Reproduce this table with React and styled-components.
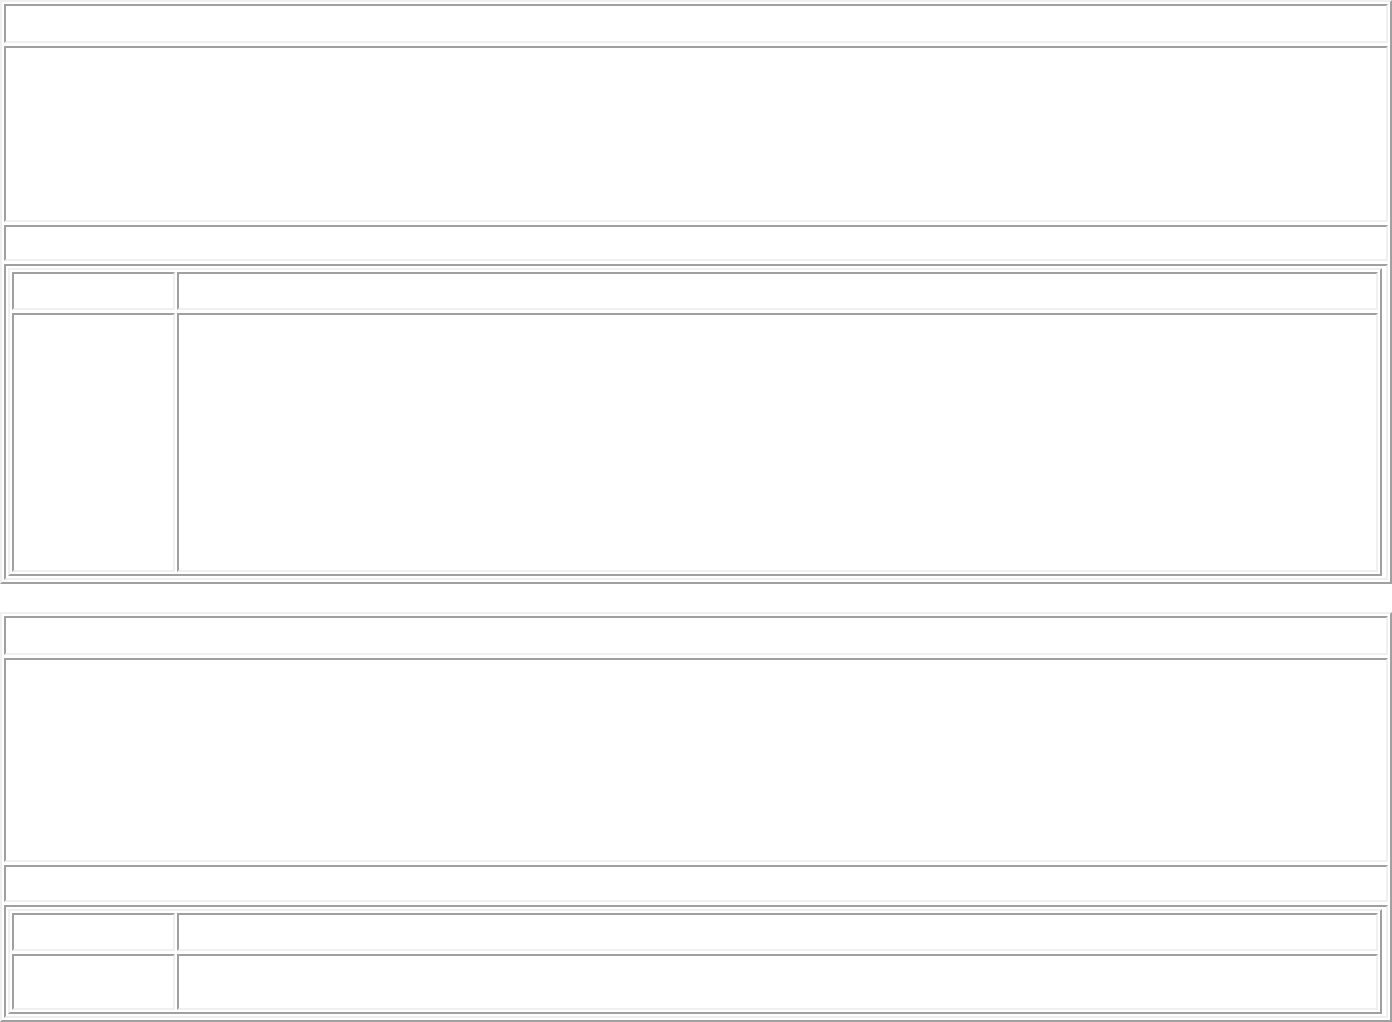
import React from "react";
import styled, { createGlobalStyle } from "styled-components";

const LIGHT = "#f0f0f0";
const DARK = "#a0a0a0";

const GlobalStyle = createGlobalStyle`
  html, body {
    margin: 0;
    padding: 0;
    background: #ffffff;
    font-family: "Liberation Serif", "Times New Roman", serif;
  }
`;

const Page = styled.div`
  display: flex;
  flex-direction: column;
  gap: 28px;
  width: 1392px;
`;

const OuterTable = styled.div`
  display: grid;
  grid-template-columns: 1fr;
  row-gap: 3px;
  padding: 2px;
  border: 2px solid;
  border-color: ${LIGHT} ${DARK} ${DARK} ${LIGHT};
  background: #ffffff;
`;

const Cell = styled.div`
  box-sizing: border-box;
  height: ${(p) => p.$h}px;
  border: 2px solid;
  border-color: ${DARK} ${LIGHT} ${LIGHT} ${DARK};
  background: #ffffff;
`;

const NestCell = styled(Cell)`
  padding: 2px 4px 2px 2px;
  display: flex;
`;

const InnerTable = styled.div`
  flex: 1;
  display: grid;
  grid-template-columns: 163px 1fr;
  column-gap: 2px;
  row-gap: 3px;
  padding: 2px;
  border: 2px solid;
  border-color: ${LIGHT} ${DARK} ${DARK} ${LIGHT};
`;

const tables = [
  { rows: [39, 176, 36], nestH: 316, inner: [38, 259] },
  { rows: [39, 204, 37], nestH: 113, inner: [38, 56] },
];

function Block({ rows, nestH, inner }) {
  return (
    <OuterTable>
      {rows.map((h, i) => (
        <Cell key={i} $h={h} />
      ))}
      <NestCell $h={nestH}>
        <InnerTable>
          {inner.map((h, i) => (
            <React.Fragment key={i}>
              <Cell $h={h} />
              <Cell $h={h} />
            </React.Fragment>
          ))}
        </InnerTable>
      </NestCell>
    </OuterTable>
  );
}

export default function App() {
  return (
    <>
      <GlobalStyle />
      <Page>
        {tables.map((t, i) => (
          <Block key={i} {...t} />
        ))}
      </Page>
    </>
  );
}
